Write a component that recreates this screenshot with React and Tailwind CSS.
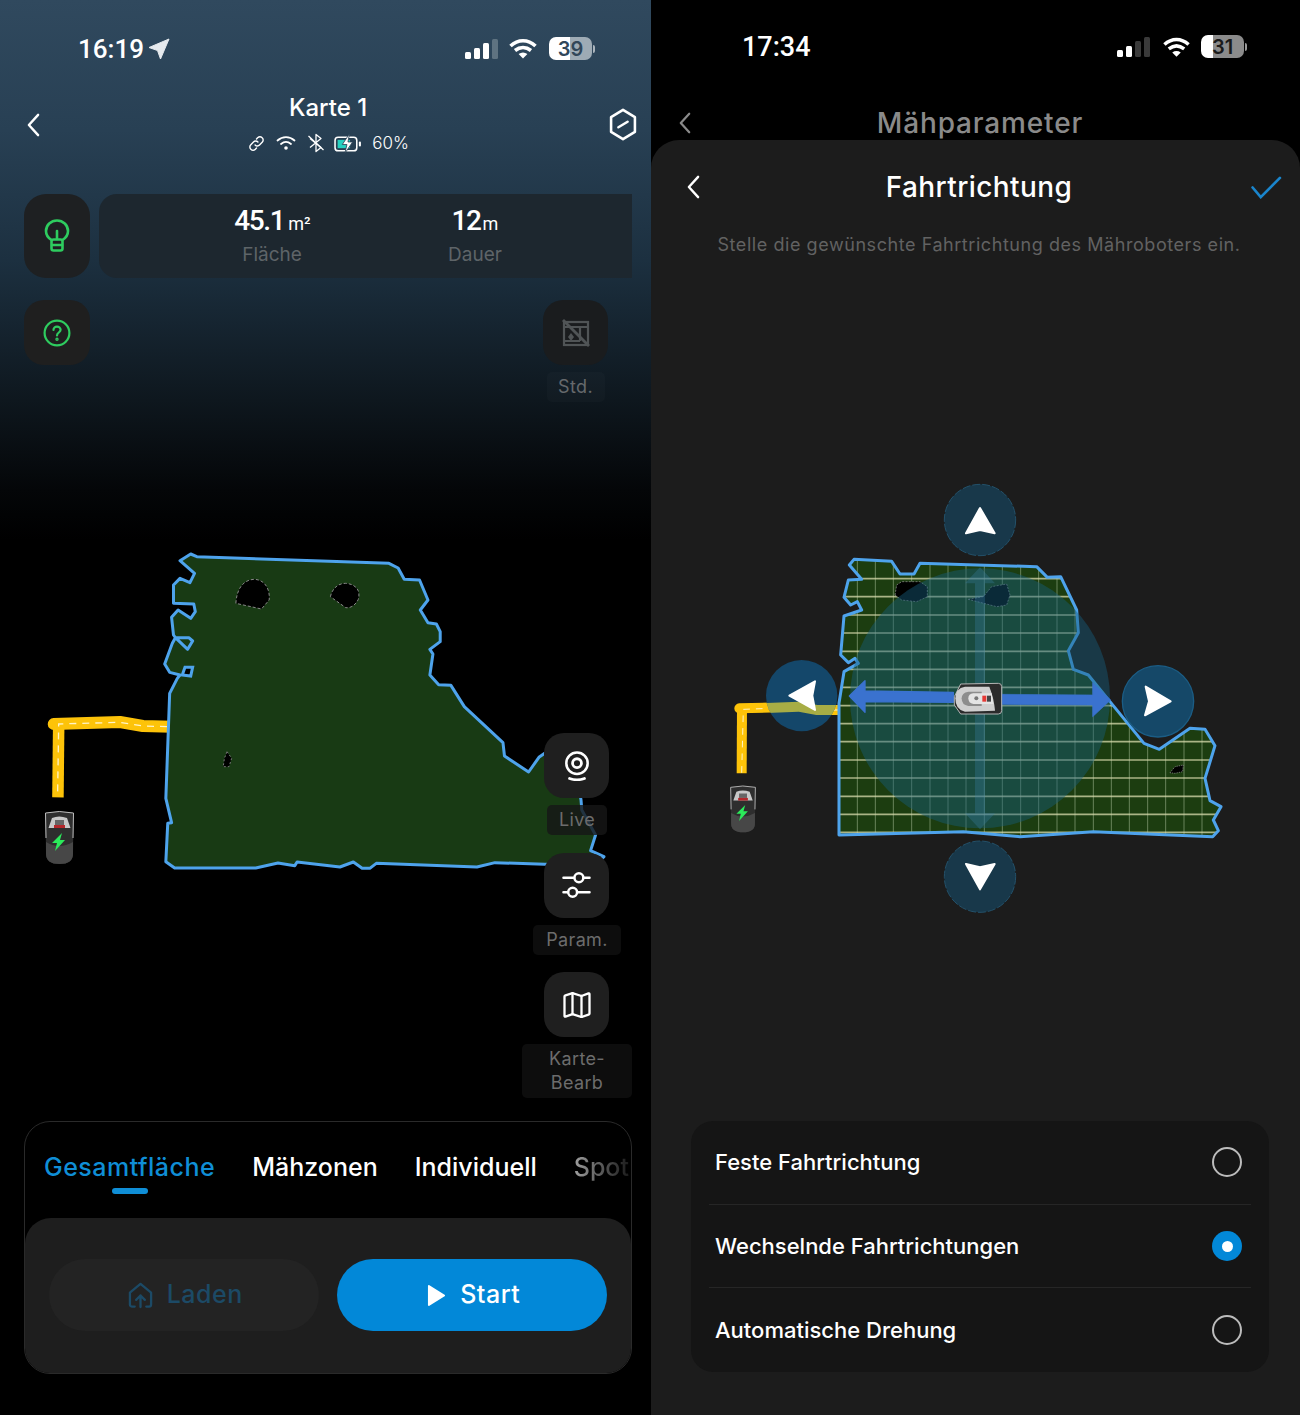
const LEFT_OUTLINE = "392,62 420,42 436,50 938,70 962,84 978,118 1018,120 1040,180 1020,210 1040,248 1062,252 1072,275 1072,305 1045,328 1053,342 1045,405 1068,434 1100,436 1135,500 1236,608 1240,648 1303,696 1330,652 1345,640 1420,650 1440,780 1442,810 1478,885 1465,932 1500,950 1478,975 1345,973 1215,968 1168,981 905,970 888,985 868,985 845,966 810,981 698,966 692,977 648,969 590,984 378,984 355,965 360,850 370,848 355,775 365,460 385,415 392,405 365,397 352,372 372,310 380,293 415,293 425,303 412,328 380,293 375,285 370,232 387,210 420,235 432,215 428,192 375,190 375,135 392,115 418,128 430,100 392,62"
const RIGHT_OUTLINE = "388,255 402,238 515,244 540,282 582,282 600,250 950,260 982,292 1022,290 1070,390 1075,458 1045,512 1060,568 1105,585 1170,665 1272,790 1318,808 1410,745 1455,748 1485,797 1455,895 1470,962 1503,980 1480,1020 1495,1052 1478,1070 1120,1055 900,1070 730,1055 357,1065 357,670 372,575 415,550 405,535 385,548 362,525 372,408 425,390 412,365 392,375 372,352 385,300 425,298 388,255"
const ROWS = [296, 350, 405, 459, 514, 568, 622, 677, 731, 785, 840, 894, 949, 1003, 1057]
const COLS = [412, 466, 520, 575, 630, 684, 738, 793, 847, 902, 956, 1011, 1065, 1120, 1174, 1228, 1283, 1337, 1392, 1446]

function Chevron({ className }) {
    return (
        <svg viewBox="0 0 16 26" className={className} fill="none" stroke="currentColor" strokeWidth="2.6" strokeLinecap="round" strokeLinejoin="round">
            <path d="M13 2 L3 13 L13 24" />
        </svg>
    )
}

function Signal({ on, dim, className = "" }) {
    return (
        <svg viewBox="0 0 33 20" className={`w-[33px] h-[20px] ${className}`}>
            {[[0, 13, 7], [9, 9, 11], [18, 4, 16], [27, 0, 20]].map(([x, y, h], i) => (
                <rect key={x} x={x} y={y} width="6" height={h} rx="1.5" fill={i < on ? "#fff" : dim} />
            ))}
        </svg>
    )
}

function Wifi({ className }) {
    return (
        <svg viewBox="0 0 28 20" className={className} fill="none" stroke="#fff" strokeWidth="3.6">
            <path d="M1.5 7.5 C9 0.5 19 0.5 26.5 7.5" />
            <path d="M6 12 C11 8 17 8 22 12" />
            <path d="M14 20 L9.6 15.6 C12.4 13.6 15.6 13.6 18.4 15.6 Z" fill="#fff" stroke="none" />
        </svg>
    )
}

function Battery({ level, textColor, fillClass }) {
    return (
        <div className="flex items-center gap-[1px]">
            <div className={`w-[43px] h-[23px] rounded-[7px] flex items-center justify-center text-[20px] font-semibold leading-none ${textColor} ${fillClass}`}>
                {level}
            </div>
            <div className="w-[2px] h-[8px] rounded-r-full bg-white/60"></div>
        </div>
    )
}

function Tile({ children, className = "" }) {
    return (
        <div className={`w-[65px] h-[65px] rounded-[20px] bg-[#1f1f1f] flex items-center justify-center ${className}`}>
            {children}
        </div>
    )
}

function Label({ children, className = "" }) {
    return (
        <div className={`mt-[7px] rounded-[5px] bg-white/5 text-[#6c6c6c] text-[18px] leading-[24px] tracking-[0.02em] text-center py-[3px] ${className}`}>
            {children}
        </div>
    )
}

function Radio({ active }) {
    if (active) {
        return (
            <div className="w-[30px] h-[30px] rounded-full bg-[#0288d8] flex items-center justify-center">
                <div className="w-[11px] h-[11px] rounded-full bg-white"></div>
            </div>
        )
    }
    return <div className="w-[30px] h-[30px] rounded-full border-2 border-[#bcbcbc]"></div>
}

function DockShape() {
    return (
        <g>
            <path d="M1.5 3 Q15 0 29.5 3 L29 44 Q29 54 15.5 54 Q2 54 2 44 Z" fill="#2e2e2e" />
            <path d="M2 32 L2 44 Q2 54 15.5 54 Q29 54 29 44 L29 32 Q15 40 2 32 Z" fill="#474747" />
            <path d="M2 28 L1.5 3 Q15 0 29.5 3 L29 28" fill="none" stroke="#bdbdbd" strokeWidth="1" />
            <path d="M4.5 18 L8 8 Q15 5 23 8 L26.5 18 Z" fill="#c8c8c8" />
            <rect x="11" y="10" width="9" height="5" fill="#666" />
            <rect x="10" y="15" width="11" height="3" fill="#b3272b" />
            <path d="M18 23 L8 33 L13 33 L11 41 L21 30 L16 30 Z" fill="#2bea5a" />
        </g>
    )
}

function LeftMap() {
    return (
        <svg viewBox="0 0 1568 1020" preserveAspectRatio="none" className="absolute left-[30px] top-[540px] w-[600px] h-[340px]">
            <path d="M62 552 L235 546 L295 558 L370 560" fill="none" stroke="#fdc309" strokeWidth="12" strokeLinejoin="round" strokeLinecap="round" vectorEffect="non-scaling-stroke" />
            <path d="M75 552 L73 772" fill="none" stroke="#fdc309" strokeWidth="11.5" vectorEffect="non-scaling-stroke" />
            <path d="M358 560 L295 558 L235 547 L75 552 L72 772" fill="none" stroke="#fff4c8" strokeWidth="1.3" strokeDasharray="7 6" vectorEffect="non-scaling-stroke" />
            <polygon points={LEFT_OUTLINE} fill="#183a14" stroke="#4ea3ec" strokeWidth="3" strokeLinejoin="round" vectorEffect="non-scaling-stroke" />
            <polygon points="398,405 405,382 425,382 420,408" fill="#000" stroke="#4ea3ec" strokeWidth="3" vectorEffect="non-scaling-stroke" />
            <path d="M538 190 C540 150 555 120 585 118 C615 118 628 150 625 180 L605 207 Z" fill="#000" stroke="#888" strokeWidth="1" strokeDasharray="3 2" vectorEffect="non-scaling-stroke" />
            <path d="M785 170 C790 145 805 130 825 130 C850 132 865 150 858 178 C850 198 835 205 825 203 Z" fill="#000" stroke="#888" strokeWidth="1" strokeDasharray="3 2" vectorEffect="non-scaling-stroke" />
            <path d="M515 635 L527 655 L520 680 L505 680 L508 655 Z" fill="#000" stroke="#777" strokeWidth="1" strokeDasharray="2 2" vectorEffect="non-scaling-stroke" />
        </svg>
    )
}

function LeftPanel() {
    return (
        <div className="relative w-[651px] h-[1415px] bg-[linear-gradient(180deg,#30495e_0px,#284054_130px,#1c3040_260px,#0e171e_400px,#040608_490px,#000_540px)] text-white shrink-0 font-['Inter',sans-serif]">
            <LeftMap />
            <svg viewBox="0 0 31 54" className="absolute left-[44px] top-[810px] w-[31px] h-[54px]"><DockShape /></svg>

            {/* status bar */}
            <div className="relative flex items-center justify-between pl-[78px] pr-[56px] pt-[33px] h-[64px]">
                <div className="flex items-center gap-[4px]">
                    <span className="text-[26px] font-medium leading-[30px] font-['Roboto',sans-serif]">16:19</span>
                    <svg viewBox="0 0 22 22" className="w-[22px] h-[22px]"><path d="M21 1 L1 9.5 L9.5 12.5 L12.5 21 Z" fill="#e6eaee" stroke="#e6eaee" strokeLinejoin="round" /></svg>
                </div>
                <div className="flex items-center gap-[12px]">
                    <Signal on={3} dim="#5f7381" className="-mr-[1px]" />
                    <Wifi className="w-[28px] h-[21px]" />
                    <Battery level="39" textColor="text-[#31475a]" fillClass="bg-[linear-gradient(90deg,#fff_50%,#9eabb5_50%)]" />
                </div>
            </div>

            {/* header */}
            <div className="relative flex items-start justify-between pl-[26px] pr-[14px] pt-[29px] h-[130px]">
                <Chevron className="w-[15px] h-[24px] mt-[20px]" />
                <div className="flex flex-col items-center ml-[7px]">
                    <div className="text-[24px] leading-[30px] font-medium -ml-[1px]">Karte 1</div>
                    <div className="flex items-center mt-[8px] h-[24px]">
                        <svg viewBox="0 0 18 18" className="w-[17px] h-[17px] mr-[11px]" fill="none" stroke="#fff" strokeWidth="1.5" strokeLinecap="round">
                            <path d="M7.5 10.5 C9 12 11 11.8 12.2 10.6 L15 7.8 C16.4 6.4 16.4 4.2 15 2.9 C13.7 1.6 11.6 1.6 10.2 3 L9 4.2" />
                            <path d="M10.5 7.5 C9 6 7 6.2 5.8 7.4 L3 10.2 C1.6 11.6 1.6 13.8 3 15.1 C4.3 16.4 6.4 16.4 7.8 15 L9 13.8" />
                        </svg>
                        <svg viewBox="0 0 20 16" className="w-[20px] h-[16px] mr-[11px]" fill="none" stroke="#fff" strokeWidth="1.8" strokeLinecap="round">
                            <path d="M1.5 5.5 C6.5 1 13.5 1 18.5 5.5" />
                            <path d="M5 9 C8 6.5 12 6.5 15 9" />
                            <circle cx="10" cy="13" r="1.8" fill="#fff" stroke="none" />
                        </svg>
                        <svg viewBox="0 0 18 20" className="w-[18px] h-[20px] mr-[9px]" fill="none" stroke="#fff" strokeWidth="1.3" strokeLinejoin="round">
                            <path d="M3 5.5 L14 14.5 L9 18.5 L9 1.5 L14 5.5 L3 14.5" />
                            <path d="M1.5 3 L16.5 17" />
                        </svg>
                        <svg viewBox="0 0 28 20" className="w-[29px] h-[21px] mr-[9px]" fill="none">
                            <rect x="1" y="4" width="21" height="13" rx="3" stroke="#fff" strokeWidth="1.5" />
                            <rect x="3.5" y="6.5" width="12" height="8" fill="#25d1c0" />
                            <rect x="24" y="8" width="2" height="5" rx="1" fill="#fff" />
                            <path d="M15 0.5 L8 11 L12.5 11 L10.5 19.5 L18 8.5 L13.5 8.5 Z" fill="#fff" stroke="#284054" strokeWidth="0.8" />
                        </svg>
                        <span className="text-[17px] font-light leading-none">60%</span>
                    </div>
                </div>
                <svg viewBox="0 0 30 36" className="w-[28px] h-[33px] mt-[15px]" fill="none" stroke="#fff" strokeWidth="2.8" strokeLinejoin="round" strokeLinecap="round">
                    <path d="M15 2 L28 10 L28 26 L15 34 L2 26 L2 10 Z" />
                    <path d="M10 21 L20 15" />
                </svg>
            </div>

            {/* stats */}
            <div className="relative flex gap-[9px] pl-[24px] pr-[19px]">
                <div className="w-[66px] h-[84px] rounded-[22px] bg-[#1e2022] flex items-center justify-center">
                    <svg viewBox="0 0 26 34" className="w-[26px] h-[34px]" fill="none" stroke="#2ecc5f" strokeWidth="2.6" strokeLinecap="round" strokeLinejoin="round">
                        <path d="M7.5 21 C4 18.8 2 15.8 2 12 C2 6 7 1.5 13 1.5 C19 1.5 24 6 24 12 C24 15.8 22 18.8 18.5 21" />
                        <path d="M13 12 L13 20" />
                        <rect x="7.5" y="20.5" width="11" height="11" rx="2" />
                        <path d="M8 26 L18 26" />
                    </svg>
                </div>
                <div className="flex-1 h-[84px] rounded-l-[18px] bg-[#1d272f] flex">
                    <div className="w-[346px] flex flex-col items-center pt-[10px]">
                        <div className="flex items-baseline font-['Roboto',sans-serif] h-[34px] ml-[1px]">
                            <span className="text-[28px] font-medium leading-[34px] tracking-[-0.05em]">45.1</span>
                            <span className="text-[18px] ml-[4px] leading-none">m²</span>
                        </div>
                        <span className="text-[19px] leading-[24px] mt-[5px] text-[#5e6468]">Fläche</span>
                    </div>
                    <div className="w-[60px] flex flex-col items-center pt-[10px]">
                        <div className="flex items-baseline font-['Roboto',sans-serif] h-[34px]">
                            <span className="text-[28px] font-medium leading-[34px] tracking-[-0.05em]">12</span>
                            <span className="text-[18px] ml-[2px] leading-none">m</span>
                        </div>
                        <span className="text-[19px] leading-[24px] mt-[5px] text-[#5e6468]">Dauer</span>
                    </div>
                </div>
            </div>

            {/* help + map tools */}
            <div className="relative flex justify-between pl-[24px] pr-[19px] mt-[22px]">
                <Tile className="!w-[66px] bg-[#1a1c1d]">
                    <svg viewBox="0 0 28 28" className="w-[28px] h-[28px]" fill="none" stroke="#2ecc5f" strokeWidth="2.2" strokeLinecap="round">
                        <circle cx="14" cy="14" r="12.4" />
                        <path d="M10.5 11 C10.5 8.8 12 7.6 14 7.6 C16 7.6 17.6 9 17.6 10.8 C17.6 13.4 14 13.6 14 16.4" />
                        <circle cx="14" cy="20.3" r="0.6" fill="#2ecc5f" />
                    </svg>
                </Tile>
                <div className="w-[110px] flex flex-col items-center">
                    <Tile className="!bg-[#1a1c1e] -ml-[3px]">
                        <svg viewBox="0 0 28 28" className="w-[28px] h-[28px]" fill="none" stroke="#505456" strokeWidth="2.2">
                            <rect x="2" y="3" width="24" height="23" />
                            <path d="M2 8 L26 8 M18 8 L18 22 M2 22 L18 22" />
                            <path d="M1 1 L27 27" strokeWidth="2.8" />
                            <path d="M9 14 L12 18 L9 22 L6 18 Z" fill="#505456" stroke="none" />
                        </svg>
                    </Tile>
                    <Label className="w-[58px] -ml-[3px] !text-[#66696c] !bg-white/[0.02]">Std.</Label>

                    <Tile className="mt-[331px] -ml-[1px]">
                        <svg viewBox="0 0 28 32" className="w-[26px] h-[30px]" fill="none" stroke="#fff" strokeWidth="2.7" strokeLinecap="round">
                            <circle cx="14" cy="13" r="11.5" />
                            <circle cx="14" cy="13" r="4.8" strokeWidth="3" />
                            <path d="M6 29.5 C10.5 31 17.5 31 22 29.5" strokeWidth="3" />
                        </svg>
                    </Tile>
                    <Label className="w-[60px] !bg-[#161616]/80">Live</Label>

                    <Tile className="mt-[18px] -ml-[1px]">
                        <svg viewBox="0 0 30 28" className="w-[29px] h-[27px]" fill="none" stroke="#fff" strokeWidth="2.6" strokeLinecap="round">
                            <path d="M1.5 6 L12 6 M22.5 6 L28.5 6" />
                            <circle cx="17.5" cy="6" r="4.6" />
                            <path d="M1.5 21 L6 21 M16 21 L28.5 21" />
                            <circle cx="11" cy="21" r="4.6" />
                        </svg>
                    </Tile>
                    <Label className="w-[88px]">Param.</Label>

                    <Tile className="mt-[17px] -ml-[1px]">
                        <svg viewBox="0 0 28 26" className="w-[28px] h-[26px]" fill="none" stroke="#fff" strokeWidth="2.3" strokeLinejoin="round" strokeLinecap="round">
                            <path d="M1.5 4.5 Q1.5 3.6 2.5 3.3 L9.5 1.2 L18.5 4 L25.5 1.4 Q26.5 1.2 26.5 2.2 L26.5 21.5 Q26.5 22.4 25.5 22.7 L18.5 25 L9.5 22.2 L2.5 24.6 Q1.5 24.8 1.5 23.8 Z" />
                            <path d="M9.5 1.2 L9.5 22.2 M18.5 4 L18.5 25" />
                        </svg>
                    </Tile>
                    <Label className="w-[110px] leading-[24px]">Karte-<br />Bearb</Label>
                </div>
            </div>

            {/* bottom card */}
            <div className="relative mt-[23px] ml-[24px] w-[608px] h-[253px] rounded-[26px] border border-[#2a2a2a] overflow-hidden flex flex-col">
                <div className="flex gap-[37px] pl-[19px] h-[96px] overflow-hidden text-[25px] font-medium leading-[30px] pt-[30px]">
                    <div className="flex flex-col items-center shrink-0">
                        <span className="text-[#0f8ed6] tracking-[0.02em]">Gesamtfläche</span>
                        <div className="w-[36px] h-[6px] rounded-full bg-[#0f8ed6] mt-[6px]"></div>
                    </div>
                    <span className="shrink-0">Mähzonen</span>
                    <span className="shrink-0">Individuell</span>
                    <span className="shrink-0 h-[34px] bg-linear-to-r from-[#a0a0a0] to-[#1c1c1c] bg-clip-text text-transparent">Spot</span>
                </div>
                <div className="flex-1 rounded-t-[26px] bg-[#1e1e1e] flex gap-[18px] px-[24px] pt-[41px]">
                    <div className="flex-1 h-[72px] pl-[3px] rounded-full bg-[#232323] flex items-center justify-center gap-[14px] text-[#1c4a66]">
                        <svg viewBox="0 0 26 28" className="w-[25px] h-[27px]" fill="none" stroke="#1c4a66" strokeWidth="2.4" strokeLinecap="round" strokeLinejoin="round">
                            <path d="M7 25.5 L4 25.5 C2.5 25.5 2 24.5 2 23 L2 11 L13 2 L24 11 L24 23 C24 24.5 23.5 25.5 22 25.5 L19 25.5" />
                            <path d="M13 26 L13 14 M8.5 18.5 L13 14 L17.5 18.5" />
                        </svg>
                        <span className="text-[25px] font-medium tracking-[0.02em]">Laden</span>
                    </div>
                    <div className="flex-1 h-[72px] pl-[4px] rounded-full bg-[#0288d8] flex items-center justify-center gap-[14px] text-white">
                        <svg viewBox="0 0 20 24" className="w-[19px] h-[23px]"><path d="M2 2 L18 12 L2 22 Z" fill="#fff" stroke="#fff" strokeWidth="2" strokeLinejoin="round" /></svg>
                        <span className="text-[25px] font-medium tracking-[0.02em]">Start</span>
                    </div>
                </div>
            </div>
        </div>
    )
}

function RightMap() {
    return (
        <svg viewBox="0 0 1560 1320" className="w-[520px] h-[440px] ml-[69px] mt-[223px] shrink-0">
            <defs>
                <clipPath id="lawn"><polygon points={RIGHT_OUTLINE} /></clipPath>
                <clipPath id="leftBtn"><circle cx="245" cy="647" r="107" /></clipPath>
            </defs>
            <path d="M58 685 L235 680 L290 690 L370 690" fill="none" stroke="#fdc309" strokeWidth="30" strokeLinejoin="round" strokeLinecap="round" />
            <path d="M66 685 L65 880" fill="none" stroke="#fdc309" strokeWidth="30" />
            <path d="M355 690 L290 690 L235 682 L70 688 L65 880" fill="none" stroke="#fff4c8" strokeWidth="3" strokeDasharray="20 18" />
            <polygon points={RIGHT_OUTLINE} fill="#1c3d10" />
            <g clipPath="url(#lawn)">
                {COLS.map((x) => <line key={x} x1={x} x2={x} y1="230" y2="1075" stroke="#a9c09a" strokeOpacity="0.55" strokeWidth="3" />)}
                {ROWS.map((y) => <line key={y} x1="350" x2="1510" y1={y} y2={y} stroke="#d9dcae" strokeOpacity="0.75" strokeWidth="5" />)}
            </g>
            <path d="M525 345 L530 315 L545 305 L600 305 L622 320 L622 350 L590 365 L545 360 Z" fill="#000" stroke="#999" strokeWidth="2" strokeDasharray="6 4" />
            <path d="M745 358 L790 350 L815 320 L860 312 L870 345 L860 375 L830 380 Z" fill="#000" stroke="#999" strokeWidth="2" strokeDasharray="6 4" />
            <path d="M1350 878 L1365 860 L1390 855 L1388 875 L1365 880 Z" fill="#000" stroke="#999" strokeWidth="2" strokeDasharray="4 3" />

            <g transform="translate(28 914) scale(2.65)"><DockShape /></g>

            <polygon points={RIGHT_OUTLINE} fill="none" stroke="#4ea3ec" strokeWidth="9" strokeLinejoin="round" />

            <circle cx="780" cy="655" r="390" fill="#175e7c" fillOpacity="0.45" />
            <path d="M765 310 L735 310 L780 262 L825 310 L795 310 L795 1000 L825 1000 L780 1048 L735 1000 L765 1000 Z" fill="#3d82a8" fillOpacity="0.3" />

            <path d="M700 637 L435 633 L435 602 L388 648 L435 697 L435 665 L700 667 Z" fill="#3a72cf" stroke="#3a72cf" strokeWidth="4" strokeLinejoin="round" />
            <path d="M845 643 L1118 645 L1118 608 L1172 660 L1118 710 L1118 675 L845 673 Z" fill="#3a72cf" stroke="#3a72cf" strokeWidth="2" strokeLinejoin="round" />

            <path d="M703 650 L722 612 L835 610 Q845 610 845 620 L845 692 Q845 702 835 702 L722 702 L703 675 Z" fill="#2b2b2b" stroke="#b5b5b5" strokeWidth="3" />
            <path d="M706 655 Q706 625 735 620 L808 620 Q822 655 825 692 L735 695 Q706 690 706 655 Z" fill="#cfcfcf" />
            <path d="M725 655 Q725 638 745 635 L785 635 L785 678 L745 678 Q725 675 725 655 Z" fill="#8d8d8d" />
            <path d="M745 655 Q745 642 760 640 L815 640 L820 672 L760 672 Q745 670 745 655 Z" fill="#e4e4e4" />
            <circle cx="769" cy="655" r="6" fill="#777" />
            <rect x="787" y="647" width="12" height="18" fill="#e53935" />
            <rect x="801" y="647" width="12" height="18" fill="#444" />

            <circle cx="780" cy="120" r="107" fill="#18384a" stroke="#23516a" strokeWidth="3" strokeDasharray="24 6" />
            <circle cx="780" cy="1190" r="107" fill="#18384a" stroke="#23516a" strokeWidth="3" strokeDasharray="24 6" />
            <circle cx="245" cy="647" r="107" fill="#14476a" />
            <circle cx="1314" cy="664" r="107" fill="#154868" stroke="#1b5d85" strokeWidth="4" />
            <path d="M140 684 L235 680 L290 690 L370 690" clipPath="url(#leftBtn)" fill="none" stroke="#d8cf3a" strokeOpacity="0.75" strokeWidth="30" />

            <g fill="#fff" stroke="#fff" strokeWidth="6" strokeLinejoin="round">
                <polygon points="780,84 738,160 780,150 824,160" />
                <polygon points="780,1228 738,1152 780,1162 824,1152" />
                <polygon points="208,647 285,604 277,647 285,690" />
                <polygon points="1352,664 1277,620 1287,664 1275,706" />
            </g>
        </svg>
    )
}

function RightPanel() {
    return (
        <div className="w-[649px] h-[1415px] bg-black text-white shrink-0 font-['Inter',sans-serif] flex flex-col overflow-hidden">
            {/* status bar */}
            <div className="flex items-center justify-between pl-[91px] pr-[53px] pt-[31px] h-[62px] shrink-0">
                <span className="text-[27px] font-medium leading-[30px] font-['Roboto',sans-serif]">17:34</span>
                <div className="flex items-center gap-[11px]">
                    <Signal on={2} dim="#3a3a3a" className="mr-[2px]" />
                    <Wifi className="w-[27px] h-[20px]" />
                    <Battery level="31" textColor="text-[#1a1a1a]" fillClass="bg-[linear-gradient(90deg,#fff_28%,#8b8b8b_28%)]" />
                </div>
            </div>
            <div className="flex items-center h-[78px] pt-[45px] pb-[1px] text-[#8a8a8a] shrink-0">
                <Chevron className="w-[14px] h-[22px] ml-[27px]" />
                <div className="flex-1 text-center text-[28px] font-medium leading-[32px] tracking-[0.03em] pr-[32px]">Mähparameter</div>
            </div>

            {/* sheet */}
            <div className="flex-1 rounded-t-[28px] bg-[#1c1c1c] flex flex-col">
                <div className="flex items-center justify-between pl-[35px] pr-[18px] pt-[32px] h-[62px] shrink-0">
                    <Chevron className="w-[15px] h-[24px] text-white" />
                    <div className="text-[28px] font-medium leading-[32px] tracking-[0.015em] ml-[6px]">Fahrtrichtung</div>
                    <svg viewBox="0 0 32 24" className="w-[31px] h-[23px]" fill="none" stroke="#1a85cc" strokeWidth="2.8" strokeLinecap="round">
                        <path d="M1.5 12 L10 22 L30 2" />
                    </svg>
                </div>
                <div className="text-center text-[18px] leading-[24px] mt-[31px] pl-[7px] text-[#626262] tracking-[0.031em] shrink-0">
                    Stelle die gewünschte Fahrtrichtung des Mähroboters ein.
                </div>
                <RightMap />

                <div className="ml-[40px] mt-[201px] w-[578px] h-[251px] rounded-[22px] bg-[#151515] px-[18px] flex flex-col shrink-0">
                    {[
                        ["Feste Fahrtrichtung", false],
                        ["Wechselnde Fahrtrichtungen", true],
                        ["Automatische Drehung", false],
                    ].map(([label, active], i) => (
                        <div key={label} className={`h-[84px] flex items-center justify-between pl-[6px] pr-[9px] ${i < 2 ? "border-b border-[#262626]" : ""}`}>
                            <span className="text-[22px] font-medium leading-[28px]">{label}</span>
                            <Radio active={active} />
                        </div>
                    ))}
                </div>
            </div>
        </div>
    )
}

export default function App() {
    return (
        <div className="flex w-[1300px] h-[1415px] bg-black">
            <LeftPanel />
            <RightPanel />
        </div>
    )
}
